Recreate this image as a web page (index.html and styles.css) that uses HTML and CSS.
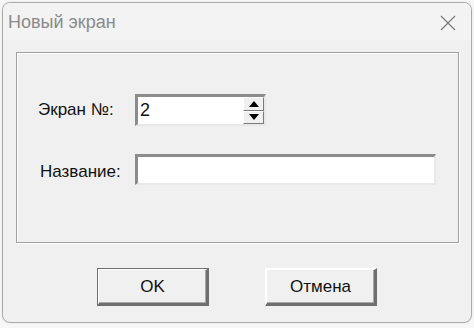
FILE: index.html
```html
<!DOCTYPE html>
<html lang="ru">
<head>
    <meta charset="UTF-8">
    <title>Новый экран</title>
    <link rel="stylesheet" href="styles.css">
</head>
<body>
    <div class="window">
        <div class="titlebar">
            <span class="title">Новый экран</span>
            <svg class="close" width="16" height="16" viewBox="0 0 16 16">
                <path d="M1 1 L15 15 M15 1 L1 15" stroke="#7a7a7a" stroke-width="1.2" fill="none"/>
            </svg>
        </div>
        <div class="client">
            <div class="frame">
                <label class="label">Экран №:</label>
                <div class="spin">
                    <input class="spin-value" type="text" value="2">
                    <div class="spin-btns">
                        <span class="spin-btn"><span class="arrow-up"></span></span>
                        <span class="spin-btn"><span class="arrow-down"></span></span>
                    </div>
                </div>
                <label class="label label-name">Название:</label>
                <input class="field" type="text">
            </div>
            <div class="buttons">
                <button class="btn btn-default">OK</button>
                <button class="btn">Отмена</button>
            </div>
        </div>
    </div>
</body>
</html>
```

FILE: styles.css
```css
body {
    margin: 0;
    padding: 2px 3px 5px 2px;
    background-color: #f7f7f7;
    font-family: "Liberation Sans", Arial, sans-serif;
}

.window {
    width: 470px;
    height: 321px;
    box-sizing: border-box;
    border: 1px solid #ababab;
    border-radius: 8px;
    background-color: #f0f0f0;
    overflow: hidden;
    box-shadow: 0 0 2px rgba(0,0,0,0.12);
}

.titlebar {
    height: 37px;
    background-color: #f3f3f3;
    display: flex;
    align-items: center;
    justify-content: space-between;
    padding: 0 15px 0 5px;
}

.title {
    font-size: 18px;
    color: #8a8a8a;
    margin-top: 2px;
}

.close {
    display: block;
    margin-top: 2px;
}

.client {
    padding: 12px 12px 0 13px;
}

.frame {
    height: 191px;
    box-sizing: border-box;
    border: 1px solid #a0a0a0;
    box-shadow: 1px 1px 0 #fff, inset 1px 1px 0 #fff;
    padding: 41px 0 0 21px;
    display: grid;
    grid-template-columns: 97px auto;
    grid-template-rows: 32px 31px;
    row-gap: 28px;
    align-items: center;
}

.label {
    font-size: 17px;
    color: #111;
}

.label-name {
    padding-left: 2px;
    margin-top: 4px;
}

.spin {
    width: 131px;
    height: 32px;
    box-sizing: border-box;
    display: flex;
    background-color: #fff;
    border-top: 3px solid #8c8c8c;
    border-left: 3px solid #8c8c8c;
    border-bottom: 2px solid #e8e8e8;
    border-right: 2px solid #e8e8e8;
}

.spin-value,
.field {
    border: none;
    outline: none;
    font-family: "Liberation Sans", Arial, sans-serif;
    font-size: 18px;
    color: #111;
    background-color: #fff;
}

.spin-value {
    flex: 1;
    width: 0;
    padding: 0 0 0 2px;
}

.spin-btns {
    width: 21px;
    display: flex;
    flex-direction: column;
}

.spin-btn {
    flex: 1;
    display: flex;
    align-items: center;
    justify-content: center;
    background-color: #f0f0f0;
    border-top: 1px solid #fff;
    border-left: 1px solid #fff;
    border-bottom: 1px solid #7a7a7a;
    border-right: 1px solid #7a7a7a;
}

.arrow-up {
    width: 0;
    height: 0;
    border-left: 5px solid transparent;
    border-right: 5px solid transparent;
    border-bottom: 6px solid #000;
}

.arrow-down {
    width: 0;
    height: 0;
    border-left: 5px solid transparent;
    border-right: 5px solid transparent;
    border-top: 6px solid #000;
}

.field {
    width: 301px;
    height: 31px;
    box-sizing: border-box;
    border-top: 3px solid #8c8c8c;
    border-left: 3px solid #8c8c8c;
    border-bottom: 2px solid #e8e8e8;
    border-right: 2px solid #e8e8e8;
}

.buttons {
    display: flex;
    gap: 56px;
    padding: 25px 0 0 81px;
}

.btn {
    width: 112px;
    height: 38px;
    box-sizing: border-box;
    background-color: #f0f0f0;
    font-family: "Liberation Sans", Arial, sans-serif;
    font-size: 17px;
    color: #111;
    padding: 0;
    border-top: 2px solid #fff;
    border-left: 2px solid #fff;
    border-bottom: 3px solid #6e6e6e;
    border-right: 3px solid #6e6e6e;
    box-shadow: inset -1px -1px 0 #a8a8a8;
}

.btn-default {
    outline: 1px solid #6e6e6e;
    outline-offset: -1px;
}
```
